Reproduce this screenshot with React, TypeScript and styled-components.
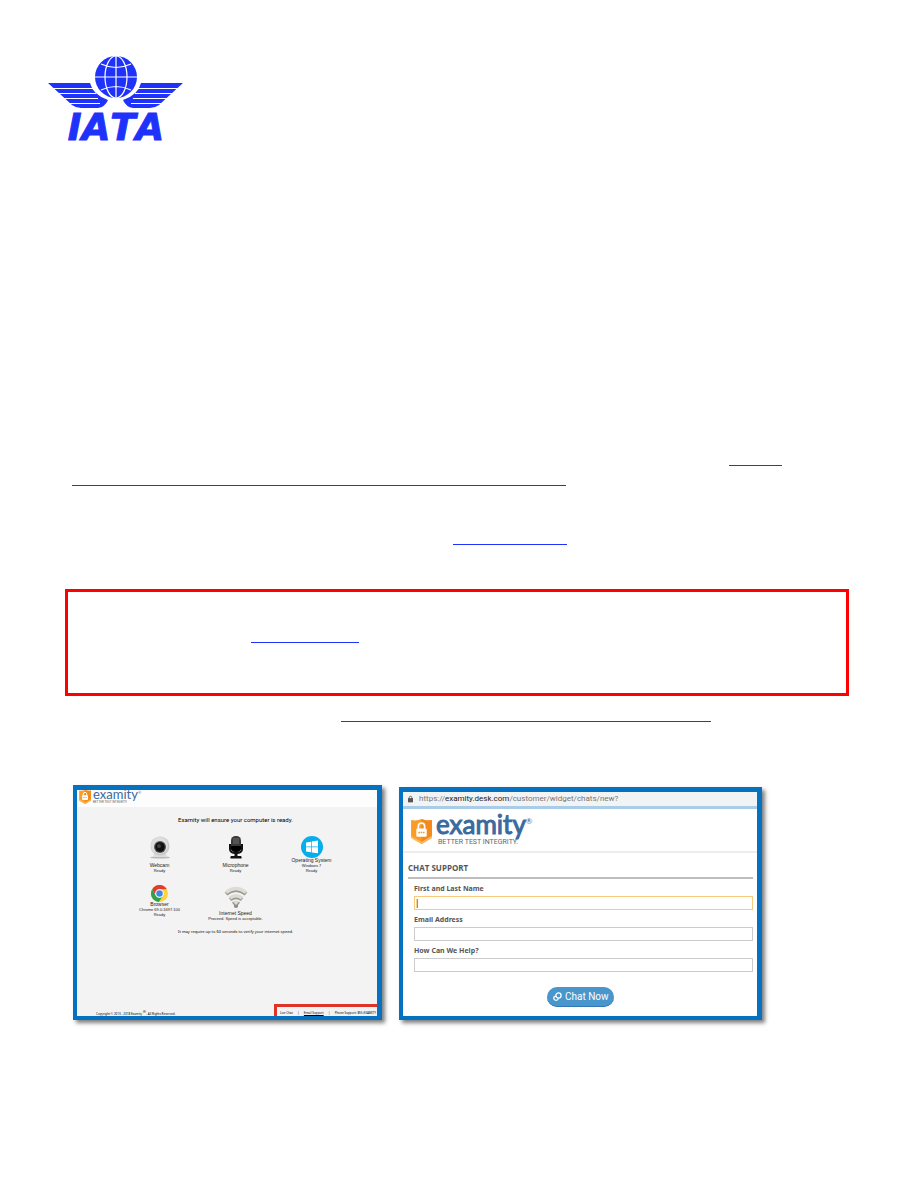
import React from "react";
import styled, { createGlobalStyle } from "styled-components";

const Global = createGlobalStyle`
  * { box-sizing: border-box; }
  body { margin: 0; background: #fff; font-family: "Liberation Sans", Arial, sans-serif; color: #222; }
  h1, h2, p { margin: 0; font-weight: 400; }
  svg { display: block; flex: none; }
`;

const Page = styled.main`
  padding: 56px 69px 160px 65px;
`;
const Header = styled.header`
  margin-left: -17px;
  height: 394px;
`;
const LinkRow = styled.p<{ $start: number; $height: number }>`
  display: flex;
  height: ${(p) => p.$height}px;
  padding-left: ${(p) => p.$start}px;
`;
const BlankLink = styled.a<{ $width: number }>`
  width: ${(p) => p.$width}px;
  height: 16px;
  border-bottom: 1px solid #1e32fa;
`;
const Notice = styled.section`
  height: 107px;
  margin-bottom: 10px;
  padding-top: 35px;
  border: 3px solid #f00;
`;
const Figures = styled.div`
  display: flex;
  align-items: flex-start;
  gap: 17px;
  padding-left: 8px;
`;
const Shot = styled.section<{ $width: number; $offset?: boolean }>`
  width: ${(p) => p.$width}px;
  flex: none;
  margin-top: ${(p) => (p.$offset ? 2 : 0)}px;
  border: solid #0472c0;
  border-width: 5px 5px 4px 4px;
  box-shadow: 3px 3px 4px rgba(0, 0, 0, 0.5);
  overflow: hidden;
`;

/* readiness check */
const Check = styled.div`
  display: flex;
  flex-direction: column;
  height: 226px;
  background: #f3f3f3;
  font-family: "Noto Sans", sans-serif;
`;
const CheckTop = styled.div`
  height: 17px;
  padding-left: 2px;
  background: #fdfdfd;
`;
const Brand = styled.div<{ $big?: boolean }>`
  display: flex;
  align-items: flex-start;
  gap: ${(p) => (p.$big ? 4 : 2)}px;
`;
const ShieldBox = styled.div<{ $big?: boolean }>`
  padding-top: ${(p) => (p.$big ? 7 : 0)}px;
`;
const BrandWords = styled.div`
  display: flex;
  flex-direction: column;
  white-space: nowrap;
`;
const BrandName = styled.div<{ $big?: boolean }>`
  font-family: Lato, sans-serif;
  font-size: ${(p) => (p.$big ? 26 : 13)}px;
  line-height: ${(p) => (p.$big ? 25 : 9)}px;
  color: #3a6a9e;
  -webkit-text-stroke: ${(p) => (p.$big ? "1px" : "0")} #3a6a9e;
  sup {
    font-size: ${(p) => (p.$big ? 8 : 4)}px;
    line-height: 0;
    vertical-align: ${(p) => (p.$big ? 10 : 5)}px;
    -webkit-text-stroke: 0;
  }
`;
const BrandTag = styled.div<{ $big?: boolean }>`
  font-family: Roboto, sans-serif;
  font-size: ${(p) => (p.$big ? 7 : 3)}px;
  line-height: ${(p) => (p.$big ? 10 : 5)}px;
  padding: ${(p) => (p.$big ? "0 0 0 2px" : "1px 0 0")};
  color: #666;
`;
const CheckBody = styled.div`
  padding: 7px 0 0 17px;
`;
const CheckTitle = styled.h1`
  font-family: Roboto, sans-serif;
  font-size: 6px;
  line-height: 12px;
  text-align: center;
  color: #000;
`;
const Grid = styled.div`
  display: grid;
  grid-template-columns: 76px 76px 76px;
  grid-template-rows: 49px 43px;
  justify-content: center;
  padding-top: 10px;
`;
const Device = styled.div`
  display: flex;
  flex-direction: column;
  align-items: center;
  white-space: nowrap;
  font-family: "Liberation Sans", sans-serif;
  font-size: 5px;
  line-height: 5px;
  color: #222;
`;
const DeviceNote = styled.span`
  font-size: 4px;
`;
const CheckHint = styled.p`
  font-size: 4px;
  line-height: 8px;
  text-align: center;
  color: #000;
`;
const CheckFoot = styled.footer`
  display: flex;
  justify-content: space-between;
  align-items: flex-end;
  margin-top: auto;
  padding-left: 19px;
  font-size: 3px;
  line-height: 4px;
  white-space: nowrap;
  color: #000;
  sup { font-size: 4px; line-height: 0; }
`;
const Support = styled.nav`
  display: flex;
  justify-content: space-between;
  width: 103px;
  height: 12px;
  padding: 4px 1px 0 3px;
  border: solid #e03328;
  border-width: 3px 0 0 3px;
  line-height: 5px;
  a { color: inherit; text-decoration: none; }
  a.marked { text-decoration: underline; }
`;

/* chat support */
const Address = styled.div`
  display: flex;
  align-items: center;
  gap: 6px;
  height: 17px;
  padding-left: 5px;
  border-bottom: 3px solid #a9cde9;
  background: #f1f3f4;
  font-family: Roboto, sans-serif;
  font-size: 8px;
  line-height: 12px;
  color: #777;
  b { font-weight: 400; color: #222; }
`;
const ChatHeader = styled.div`
  height: 44px;
  padding: 3px 0 0 8px;
  border-bottom: 2px solid #ededed;
`;
const ChatForm = styled.form`
  padding: 7px 4px 9px 5px;
`;
const ChatTitle = styled.h2`
  height: 19px;
  border-bottom: 2px solid #bdbdbd;
  font-family: "Open Sans", sans-serif;
  font-size: 8px;
  font-weight: 700;
  line-height: 16px;
  color: #555;
  margin-bottom: 3px;
`;
const Field = styled.label`
  display: flex;
  flex-direction: column;
  height: 31px;
  padding-left: 6px;
  font-family: "Noto Sans", sans-serif;
  font-size: 7px;
  font-weight: 700;
  line-height: 14px;
  color: #555;
`;
const Input = styled.input<{ $active?: boolean }>`
  width: 100%;
  height: 14px;
  padding: 0 1px;
  border: 1px solid ${(p) => (p.$active ? "#f7ca7e" : "#ccc")};
  background: #fff;
  font-size: 9px;
  line-height: 10px;
  color: #333;
  outline: 0;
`;
const ChatButton = styled.button`
  display: flex;
  align-items: center;
  gap: 3px;
  width: 67px;
  height: 20px;
  margin: 12px auto 0;
  padding: 0 6px;
  border: 0;
  border-bottom: 1px solid #3277b4;
  border-radius: 10px;
  background: #4996cd;
  color: #fff;
  font-family: Roboto, sans-serif;
  font-size: 10px;
  line-height: 18px;
  white-space: nowrap;
`;

const Wing = () => (
  <>
    <path d="M0 27H42Q45 39 60 44Q57 51 50 52H33Q28 52 24 49Z" />
    <path d="M4 32.500H45M9 37.500H48M14 42.500H50M19 47.500H52" fill="none" stroke="#fff" />
  </>
);
const IataLogo = () => (
  <svg width="136" height="96" viewBox="0 0 136 96" role="img" aria-label="IATA" fill="#1e32fa">
    <circle cx="68" cy="21" r="21" />
    <g fill="none" stroke="#fff" strokeWidth="1.200">
      <path d="M68 0V42M47 21H89M53 8Q68 15 83 8M53 34Q68 27 83 34" />
      <ellipse cx="68" cy="21" rx="11" ry="21" />
    </g>
    <Wing />
    <g transform="translate(135 0) scale(-1 1)"><Wing /></g>
    <text x="68" y="84" textAnchor="middle" fontFamily="'DejaVu Sans', sans-serif" fontWeight="700" fontStyle="italic" fontSize="37" fontKerning="none" stroke="#1e32fa" strokeWidth="1" style={{ fontKerning: "none" }}>IATA</text>
  </svg>
);

const Shield = ({ size }: { size: number }) => (
  <svg width={size} height={Math.round(size * 1.2)} viewBox="0 0 20 24">
    <path d="M0 1Q6 2 10 0Q14 2 20 1V18L10 24L0 18Z" fill="#fb9c28" />
    <path d="M10 0Q14 2 20 1V18L10 24Z" fill="#f48a1c" />
    <path d="M0 18L10 24L20 18V16L10 22L0 16Z" fill="#fdbb5d" />
    <path d="M7 10V7Q7 4 10 4T13 7V10" fill="none" stroke="#fff" strokeWidth="1.600" />
    <rect x="5" y="9" width="10" height="8" rx="1" fill="#fff" />
    <path d="M7 13H13" stroke="#f79428" strokeWidth="1.500" strokeDasharray="1.500 .7" />
  </svg>
);

const ExamityBrand = ({ big }: { big?: boolean }) => (
  <Brand $big={big}>
    <ShieldBox $big={big}><Shield size={big ? 21 : 12} /></ShieldBox>
    <BrandWords>
      <BrandName $big={big}>examity<sup>®</sup></BrandName>
      <BrandTag $big={big}>BETTER TEST INTEGRITY.</BrandTag>
    </BrandWords>
  </Brand>
);

const Webcam = () => (
  <svg width="22" height="27" viewBox="0 0 22 27">
    <ellipse cx="11" cy="21.500" rx="10" ry="1" fill="#b9b9b9" />
    <path d="M5 17L4 21H18L17 17Z" fill="#ddd" />
    <circle cx="11" cy="10" r="9.500" fill="#c9c9c9" />
    <circle cx="10.500" cy="9.500" r="8.500" fill="#dedede" />
    <circle cx="11" cy="11" r="6" fill="#555" />
    <circle cx="11" cy="11" r="4.800" fill="#111" />
    <circle cx="10" cy="10" r="2" fill="#39424e" />
  </svg>
);
const Microphone = () => (
  <svg width="22" height="27" viewBox="0 0 22 27">
    <path d="M5 8V13Q5 17 11 17T17 13V8" fill="none" stroke="#111" strokeWidth="2" />
    <rect x="6" y="0" width="10" height="16" rx="4.500" fill="#3a3a3a" />
    <path d="M8 3H14M8 5H14M8 7H14" stroke="#888" strokeWidth=".7" />
    <path d="M6 10H16V13Q15 16 11 16T6 13Z" fill="#000" />
    <path d="M9.500 16H12.500V20H16Q17.500 22.500 16 22.500H6Q4.500 22.500 6 20H9.500Z" fill="#111" />
  </svg>
);
const Windows = () => (
  <svg width="22" height="22" viewBox="0 0 22 22">
    <circle cx="11" cy="11" r="11" fill="#08aeea" />
    <path d="M5 6.500L10 5.700V10.500H5ZM10.700 5.500L17 4.500V10.500H10.700ZM5 11.200H10V16.200L5 15.500ZM10.700 11.200H17V17.300L10.700 16.400Z" fill="#fff" />
  </svg>
);
const Chrome = () => (
  <svg width="17" height="17" viewBox="0 0 24 24">
    <circle cx="12" cy="12" r="12" fill="#ffd33b" />
    <path d="M1.600 6A12 12 0 0 1 22.400 6H12A6 6 0 0 0 6.800 15Z" fill="#e33b2e" />
    <path d="M1.600 6A12 12 0 0 0 11 24L17.200 15A6 6 0 0 1 6.800 15Z" fill="#2da14b" />
    <circle cx="12" cy="12" r="6" fill="#fff" />
    <circle cx="12" cy="12" r="4.600" fill="#4285e8" />
  </svg>
);
const Wifi = () => (
  <svg width="24" height="26" viewBox="0 -2 24 26">
    <g fill="none">
      <path d="M2 7Q12-1 22 7M6 12.500Q12 8 18 12.500" stroke="#9b9a92" strokeWidth="4" />
      <path d="M2 5.500Q12-2.500 22 5.500M6 11Q12 6.500 18 11" stroke="#dddcd4" strokeWidth="3.500" />
    </g>
    <path d="M8 15.500Q12 12.500 16 15.500L14 18V20Q12 22 10 20V18Z" fill="#8f8e87" />
    <path d="M9 15Q12 13 15 15L12 18Z" fill="#dddcd5" />
  </svg>
);
const Padlock = () => (
  <svg width="5" height="8" viewBox="0 0 6 8">
    <path d="M1.500 4V2Q1.500 .7 3 .7T4.500 2V4" fill="none" stroke="#555" />
    <rect y="3" width="6" height="5" fill="#555" />
  </svg>
);
const ChatLinks = () => (
  <svg width="9" height="10" viewBox="0 0 9 10" fill="none" stroke="#fff" strokeWidth="1.300">
    <circle cx="5.500" cy="3.500" r="2.600" />
    <path d="M3 4Q.6 4.400 .7 6.200T3 8.300Q5 8.300 5.500 6.300" />
  </svg>
);

export default function App() {
  return (
    <>
      <Global />
      <Page>
        <Header><IataLogo /></Header>
        <LinkRow $start={664} $height={20}><BlankLink href="#guide" aria-label="Guide" $width={53} /></LinkRow>
        <LinkRow $start={7} $height={59}><BlankLink href="#guide" aria-label="Guide continued" $width={494} /></LinkRow>
        <LinkRow $start={388} $height={60}><BlankLink href="#check" aria-label="System check" $width={114} /></LinkRow>
        <Notice>
          <LinkRow $start={183} $height={20}><BlankLink href="#contact" aria-label="Contact" $width={108} /></LinkRow>
        </Notice>
        <LinkRow $start={276} $height={79}><BlankLink href="#support" aria-label="Support" $width={370} /></LinkRow>
        <Figures>
          <Shot $width={309}>
            <Check>
              <CheckTop><ExamityBrand /></CheckTop>
              <CheckBody>
                <CheckTitle>Examity will ensure your computer is ready.</CheckTitle>
                <Grid>
                  <Device><Webcam />Webcam<DeviceNote>Ready</DeviceNote></Device>
                  <Device><Microphone />Microphone<DeviceNote>Ready</DeviceNote></Device>
                  <Device><Windows />Operating System<DeviceNote>Windows 7</DeviceNote><DeviceNote>Ready</DeviceNote></Device>
                  <Device><Chrome />Browser<DeviceNote>Chrome 69.0.3497.100</DeviceNote><DeviceNote>Ready</DeviceNote></Device>
                  <Device><Wifi />Internet Speed<DeviceNote>Proceed. Speed is acceptable.</DeviceNote></Device>
                </Grid>
                <CheckHint>It may require up to 60 seconds to verify your internet speed.</CheckHint>
              </CheckBody>
              <CheckFoot>
                <span>Copyright © 2013 - 2018 Examity <sup>®</sup>. All Rights Reserved.</span>
                <Support>
                  <a href="#chat">Live Chat</a><span>|</span><a className="marked" href="#email">Email Support</a><span>|</span><span>Phone Support: 855-EXAMITY</span>
                </Support>
              </CheckFoot>
            </Check>
          </Shot>
          <Shot $width={363} $offset>
            <Address><Padlock /><span>https://<b>examity.desk.com</b>/customer/widget/chats/new?</span></Address>
            <ChatHeader><ExamityBrand big /></ChatHeader>
            <ChatForm>
              <ChatTitle>CHAT SUPPORT</ChatTitle>
              <Field>First and Last Name<Input $active defaultValue="|" /></Field>
              <Field>Email Address<Input type="email" /></Field>
              <Field>How Can We Help?<Input /></Field>
              <ChatButton type="button"><ChatLinks />Chat Now</ChatButton>
            </ChatForm>
          </Shot>
        </Figures>
      </Page>
    </>
  );
}
